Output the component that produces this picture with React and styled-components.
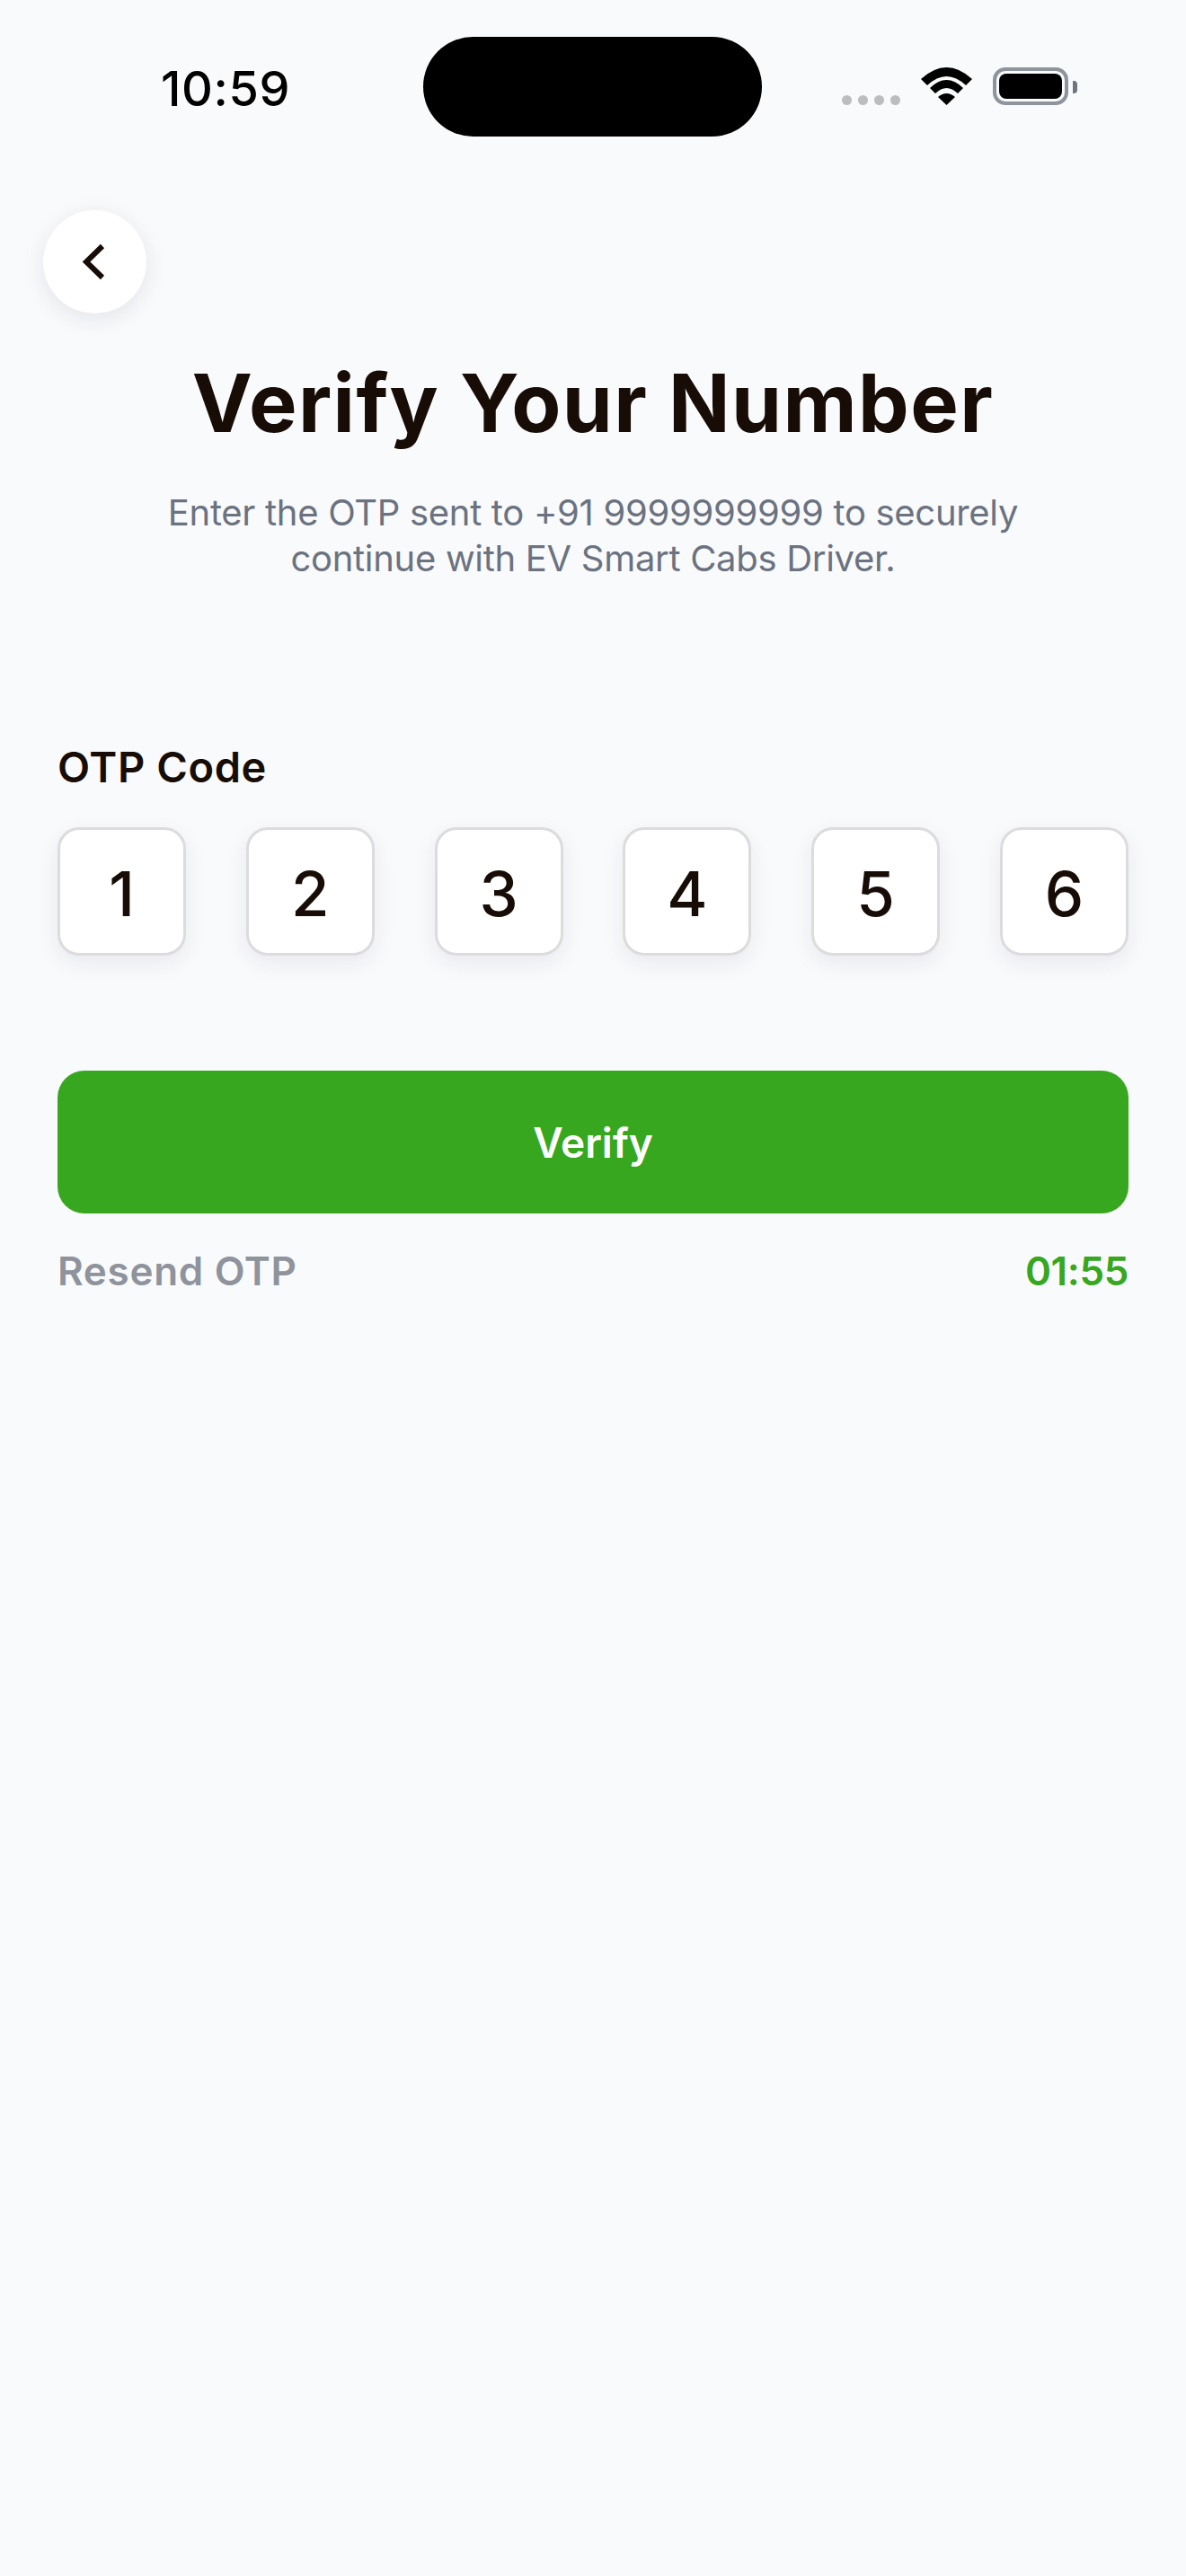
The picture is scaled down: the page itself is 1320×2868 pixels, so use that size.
import styled, { createGlobalStyle } from "styled-components";

const GlobalStyle = createGlobalStyle`
  * { box-sizing: border-box; }
  html, body { margin: 0; padding: 0; background: #f9fafc; }
  body { font-family: "Inter", "Liberation Sans", sans-serif; }
`;

const Page = styled.div`
  width: 1320px;
  height: 2868px;
  background: #f9fafc;
  overflow: hidden;
  display: flex;
  flex-direction: column;
`;

const StatusBar = styled.div`
  display: flex;
  align-items: flex-start;
  height: 111px;
  margin-top: 41px;
  padding-left: 179px;
`;

const Time = styled.div`
  width: 292px;
  margin-top: 27px;
  font-size: 54px;
  line-height: 62px;
  font-weight: 500;
  color: #000;
  letter-spacing: 0.6px;
`;

const Island = styled.div`
  width: 377px;
  height: 111px;
  border-radius: 56px;
  background: #000;
`;

const Signals = styled.div`
  display: flex;
  align-items: flex-end;
  margin-left: 89px;
  margin-top: 34px;
  height: 42px;
`;

const Dots = styled.div`
  display: flex;
  gap: 7px;
  margin-right: 23px;
`;

const Dot = styled.span`
  width: 11px;
  height: 11px;
  border-radius: 50%;
  background: #bcbdbf;
`;

const Battery = styled.div`
  position: relative;
  width: 84px;
  height: 42px;
  margin-left: 23px;
  padding: 3px;
  border-radius: 14px;
  border: 4px solid #8f949c;
  background: #f9fafc;
  &::after {
    content: "";
    position: absolute;
    right: -14px;
    top: 11px;
    width: 5px;
    height: 14px;
    border-radius: 0 4px 4px 0;
    background: #6f7580;
  }
`;

const BatteryFill = styled.div`
  width: 100%;
  height: 100%;
  border-radius: 8px;
  background: #000;
`;

const BackButton = styled.button`
  display: flex;
  align-items: center;
  justify-content: center;
  width: 115px;
  height: 115px;
  margin: 82px 0 0 48px;
  padding: 0 3px 0 0;
  border: 0;
  border-radius: 50%;
  background: #fff;
  box-shadow: 0 6px 24px rgba(40, 40, 50, 0.1);
`;

const Title = styled.h1`
  margin: 45px 0 0;
  text-align: center;
  font-size: 90px;
  line-height: 110px;
  font-weight: 700;
  letter-spacing: 1.4px;
  color: #170d06;
`;

const Subtitle = styled.p`
  margin: 41px 0 0;
  text-align: center;
  font-size: 40px;
  line-height: 51px;
  font-weight: 400;
  letter-spacing: -0.3px;
  color: #6b7280;
`;

const Form = styled.div`
  display: flex;
  flex-direction: column;
  padding: 0 64px;
  margin-top: 180px;
`;

const Label = styled.label`
  font-size: 47px;
  line-height: 54px;
  font-weight: 600;
  letter-spacing: 0.6px;
  color: #170d06;
`;

const OtpRow = styled.div`
  display: flex;
  justify-content: space-between;
  margin-top: 40px;
`;

const OtpBox = styled.div`
  display: flex;
  align-items: center;
  justify-content: center;
  width: 143px;
  height: 143px;
  padding-top: 5px;
  border: 3px solid #dcdcdf;
  border-radius: 24px;
  background: #fff;
  box-shadow: 0 8px 24px rgba(40, 40, 50, 0.08);
  font-size: 69px;
  font-weight: 500;
  color: #170d06;
`;

const VerifyButton = styled.button`
  height: 159px;
  margin-top: 128px;
  border: 0;
  border-radius: 30px;
  background: #37a71f;
  color: #fff;
  font-family: inherit;
  font-size: 46px;
  font-weight: 600;
`;

const ResendRow = styled.div`
  display: flex;
  justify-content: space-between;
  align-items: center;
  margin-top: 37px;
  font-size: 44px;
  line-height: 54px;
  font-weight: 600;
`;

const Resend = styled.span`
  color: #8f939c;
  letter-spacing: 0.7px;
`;

const Timer = styled.span`
  color: #37a71f;
  letter-spacing: -0.4px;
`;

const digits = ["1", "2", "3", "4", "5", "6"];

export default function App() {
  return (
    <Page>
      <GlobalStyle />
      <StatusBar>
        <Time>10:59</Time>
        <Island />
        <Signals>
          <Dots>
            <Dot />
            <Dot />
            <Dot />
            <Dot />
          </Dots>
          <svg width="57" height="42" viewBox="0 0 57 42" fill="#000">
            <path d="M0 13Q28.5 -13 57 13L50 20Q28.5 0 7 20Z" />
            <path d="M10 23Q28.5 5 47 23L41 29Q28.5 17 16 29Z" />
            <path d="M19 33Q28.5 25 38 33L28.5 42Z" />
          </svg>
          <Battery>
            <BatteryFill />
          </Battery>
        </Signals>
      </StatusBar>

      <BackButton aria-label="Back">
        <svg width="30" height="44" viewBox="0 0 30 44" fill="none">
          <path d="M25 4L7 21.5L25 39" stroke="#170d06" strokeWidth="6" />
        </svg>
      </BackButton>

      <Title>Verify Your Number</Title>
      <Subtitle>
        Enter the OTP sent to +91 9999999999 to securely
        <br />
        continue with EV Smart Cabs Driver.
      </Subtitle>

      <Form>
        <Label>OTP Code</Label>
        <OtpRow>
          {digits.map((d) => (
            <OtpBox key={d}>{d}</OtpBox>
          ))}
        </OtpRow>
        <VerifyButton>Verify</VerifyButton>
        <ResendRow>
          <Resend>Resend OTP</Resend>
          <Timer>01:55</Timer>
        </ResendRow>
      </Form>
    </Page>
  );
}
